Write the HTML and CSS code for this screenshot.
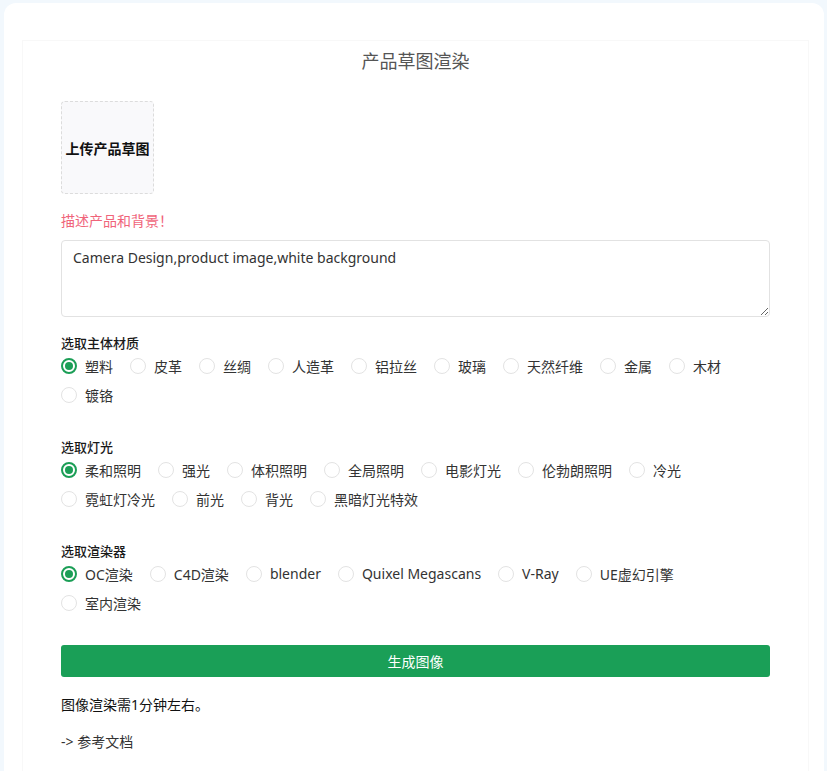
FILE: index.html
```html
<!doctype html>
<html lang="zh-CN">
  <head>
    <meta charset="UTF-8" />
    <meta name="viewport" content="width=device-width, initial-scale=1.0" />
    <title>产品草图渲染</title>
    <link rel="stylesheet" href="styles.css">
  </head>
  <body>
    <div class="card">
      <div class="panel">
        <h1 class="title">产品草图渲染</h1>

        <div class="upload">上传产品草图</div>

        <div class="hint">描述产品和背景！</div>
        <textarea class="prompt" rows="3">Camera Design,product image,white background</textarea>

        <div class="group">
          <div class="group-title">选取主体材质</div>
          <div class="options">
            <label class="radio"><input type="radio" name="material" checked /><span>塑料</span></label>
            <label class="radio"><input type="radio" name="material" /><span>皮革</span></label>
            <label class="radio"><input type="radio" name="material" /><span>丝绸</span></label>
            <label class="radio"><input type="radio" name="material" /><span>人造革</span></label>
            <label class="radio"><input type="radio" name="material" /><span>铝拉丝</span></label>
            <label class="radio"><input type="radio" name="material" /><span>玻璃</span></label>
            <label class="radio"><input type="radio" name="material" /><span>天然纤维</span></label>
            <label class="radio"><input type="radio" name="material" /><span>金属</span></label>
            <label class="radio"><input type="radio" name="material" /><span>木材</span></label>
            <label class="radio"><input type="radio" name="material" /><span>镀铬</span></label>
          </div>
        </div>

        <div class="group">
          <div class="group-title">选取灯光</div>
          <div class="options">
            <label class="radio"><input type="radio" name="light" checked /><span>柔和照明</span></label>
            <label class="radio"><input type="radio" name="light" /><span>强光</span></label>
            <label class="radio"><input type="radio" name="light" /><span>体积照明</span></label>
            <label class="radio"><input type="radio" name="light" /><span>全局照明</span></label>
            <label class="radio"><input type="radio" name="light" /><span>电影灯光</span></label>
            <label class="radio"><input type="radio" name="light" /><span>伦勃朗照明</span></label>
            <label class="radio"><input type="radio" name="light" /><span>冷光</span></label>
            <label class="radio"><input type="radio" name="light" /><span>霓虹灯冷光</span></label>
            <label class="radio"><input type="radio" name="light" /><span>前光</span></label>
            <label class="radio"><input type="radio" name="light" /><span>背光</span></label>
            <label class="radio"><input type="radio" name="light" /><span>黑暗灯光特效</span></label>
          </div>
        </div>

        <div class="group">
          <div class="group-title">选取渲染器</div>
          <div class="options">
            <label class="radio"><input type="radio" name="renderer" checked /><span>OC渲染</span></label>
            <label class="radio"><input type="radio" name="renderer" /><span>C4D渲染</span></label>
            <label class="radio"><input type="radio" name="renderer" /><span>blender</span></label>
            <label class="radio"><input type="radio" name="renderer" /><span>Quixel Megascans</span></label>
            <label class="radio"><input type="radio" name="renderer" /><span>V-Ray</span></label>
            <label class="radio"><input type="radio" name="renderer" /><span>UE虚幻引擎</span></label>
            <label class="radio"><input type="radio" name="renderer" /><span>室内渲染</span></label>
          </div>
        </div>

        <button class="btn-generate">生成图像</button>

        <p class="note">图像渲染需1分钟左右。</p>
        <a class="doc-link" href="#">-&gt; 参考文档</a>
      </div>
    </div>
  </body>
</html>
```

FILE: styles.css
```css
/* Page shell */
body {
  margin: 0;
  background-color: #f2f8fd;
  font-family: "Noto Sans", "Noto Sans CJK SC", sans-serif;
  font-size: 14px;
  color: #333;
}
.card {
  margin: 3px 3px 0 4px;
  background-color: #fff;
  border-radius: 12px 12px 0 0;
  padding: 37px 15px 0 18px;
  height: 768px;
  box-sizing: border-box;
}
.panel {
  border: 1px solid #f8f8f8;
  border-bottom: none;
  padding: 7px 38px 0 38px;
  height: 100%;
  box-sizing: border-box;
}
.title {
  margin: 0;
  font-size: 18px;
  font-weight: 400;
  line-height: 26px;
  text-align: center;
  color: #555;
}

/* Upload box */
.upload {
  margin-top: 27px;
  width: 93px;
  height: 93px;
  box-sizing: border-box;
  border: 1px dashed #dcdcdc;
  border-radius: 4px;
  background-color: #f9f9fb;
  display: flex;
  align-items: center;
  justify-content: center;
  font-size: 14px;
  font-weight: 600;
  color: #111;
}

.hint {
  margin-top: 17px;
  line-height: 20px;
  color: #f0647a; /* pink warning */
}
.prompt {
  display: block;
  margin-top: 9px;
  width: 100%;
  height: 77px;
  box-sizing: border-box;
  padding: 7px 11px;
  border: 1px solid #e2e2e2;
  border-radius: 4px;
  font-family: "Noto Sans", "Noto Sans CJK SC", sans-serif;
  font-size: 14px;
  line-height: 20px;
  color: #333;
  resize: vertical;
}

/* Radio groups */
.group {
  margin-top: 18px;
}
.group + .group {
  margin-top: 30px;
}
.group-title {
  font-size: 13px;
  font-weight: 500;
  line-height: 16px;
  color: #1a1a1a;
}
.options {
  display: flex;
  flex-wrap: wrap;
}
.radio {
  display: flex;
  align-items: center;
  height: 29px;
  margin-right: 17px;
  cursor: pointer;
  color: #333;
}
.radio input {
  appearance: none;
  -webkit-appearance: none;
  margin: 0 8px 0 0;
  width: 16px;
  height: 16px;
  border: 1px solid #e3e3e3;
  border-radius: 50%;
  box-sizing: border-box;
  position: relative;
  cursor: pointer;
}
.radio input:checked {
  border: 2px solid #1b9e56;
}
.radio input:checked::after {
  content: "";
  position: absolute;
  top: 50%;
  left: 50%;
  width: 8px;
  height: 8px;
  border-radius: 50%;
  background-color: #1b9e56;
  transform: translate(-50%, -50%);
}

.btn-generate {
  display: block;
  margin-top: 28px;
  width: 100%;
  height: 32px;
  border: none;
  border-radius: 3px;
  background-color: #1a9f57;
  color: #fff;
  font-family: "Noto Sans", "Noto Sans CJK SC", sans-serif;
  font-size: 14px;
  cursor: pointer;
}
.note {
  margin: 18px 0 0;
  line-height: 20px;
  color: #111;
}
.doc-link {
  display: block;
  margin-top: 17px;
  line-height: 20px;
  color: #333;
  text-decoration: none;
}
```
